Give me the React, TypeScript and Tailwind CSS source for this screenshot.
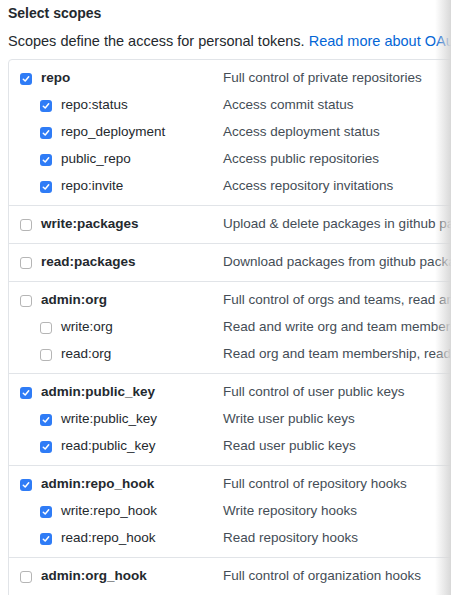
type Scope = { name: string; desc: string; checked: boolean };
type Group = { main: Scope; subs: Scope[] };

const groups: Group[] = [
  {
    main: { name: "repo", desc: "Full control of private repositories", checked: true },
    subs: [
      { name: "repo:status", desc: "Access commit status", checked: true },
      { name: "repo_deployment", desc: "Access deployment status", checked: true },
      { name: "public_repo", desc: "Access public repositories", checked: true },
      { name: "repo:invite", desc: "Access repository invitations", checked: true },
    ],
  },
  {
    main: { name: "write:packages", desc: "Upload & delete packages in github package registry", checked: false },
    subs: [],
  },
  {
    main: { name: "read:packages", desc: "Download packages from github package registry", checked: false },
    subs: [],
  },
  {
    main: { name: "admin:org", desc: "Full control of orgs and teams, read and write org projects", checked: false },
    subs: [
      { name: "write:org", desc: "Read and write org and team membership, read and write org projects", checked: false },
      { name: "read:org", desc: "Read org and team membership, read org projects", checked: false },
    ],
  },
  {
    main: { name: "admin:public_key", desc: "Full control of user public keys", checked: true },
    subs: [
      { name: "write:public_key", desc: "Write user public keys", checked: true },
      { name: "read:public_key", desc: "Read user public keys", checked: true },
    ],
  },
  {
    main: { name: "admin:repo_hook", desc: "Full control of repository hooks", checked: true },
    subs: [
      { name: "write:repo_hook", desc: "Write repository hooks", checked: true },
      { name: "read:repo_hook", desc: "Read repository hooks", checked: true },
    ],
  },
  {
    main: { name: "admin:org_hook", desc: "Full control of organization hooks", checked: false },
    subs: [],
  },
];

function Check({ on }: { on: boolean }) {
  if (!on) {
    return <span className="w-[12px] h-[12px] shrink-0 rounded-[3px] border border-[#b5b5b5] bg-white" />;
  }
  return (
    <span className="w-[12px] h-[12px] shrink-0 rounded-[3px] bg-[#2f7cf6] flex items-center justify-center">
      <svg width="8" height="8" viewBox="0 0 8 8" fill="none">
        <path d="M1.3 4.2 L3.2 6 L6.7 1.8" stroke="white" strokeWidth="1.5" strokeLinecap="round" strokeLinejoin="round" />
      </svg>
    </span>
  );
}

function Row({ scope, sub }: { scope: Scope; sub?: boolean }) {
  return (
    <div className="flex items-center h-[27px] whitespace-nowrap">
      <div className={`flex items-center w-[214px] shrink-0 ${sub ? "pl-[31px]" : "pl-[11px]"}`}>
        <Check on={scope.checked} />
        <span className={`ml-[9px] text-[#24292e] ${sub ? "" : "font-bold"}`}>{scope.name}</span>
      </div>
      <span className="text-[#444d56]">{scope.desc}</span>
    </div>
  );
}

export default function App() {
  return (
    <div className="relative w-[451px] h-[595px] overflow-hidden bg-white font-['Liberation_Sans',Arial,sans-serif] text-[13.5px]">
      <div className="pl-[8px] pt-[4px]">
        <h3 className="font-bold text-[14px] text-[#24292e] h-[18px] leading-[18px]">Select scopes</h3>
        <p className="mt-[10px] text-[14.5px] text-[#24292e] whitespace-nowrap leading-[18px]">
          Scopes define the access for personal tokens.{" "}
          <span className="text-[#0366d6]">Read more about OAuth scopes.</span>
        </p>
        <div className="mt-[9px] w-[600px] border border-[#e1e4e8] rounded-tl-[4px]">
          {groups.map((g, i) => (
            <div key={g.main.name} className={`py-[5px] ${i > 0 ? "border-t border-[#e1e4e8]" : ""}`}>
              <Row scope={g.main} />
              {g.subs.map((s) => (
                <Row key={s.name} scope={s} sub />
              ))}
            </div>
          ))}
        </div>
      </div>
      <div className="absolute top-0 right-0 w-[16px] h-full bg-gradient-to-r from-transparent to-[#d8d8d8]" />
    </div>
  );
}
